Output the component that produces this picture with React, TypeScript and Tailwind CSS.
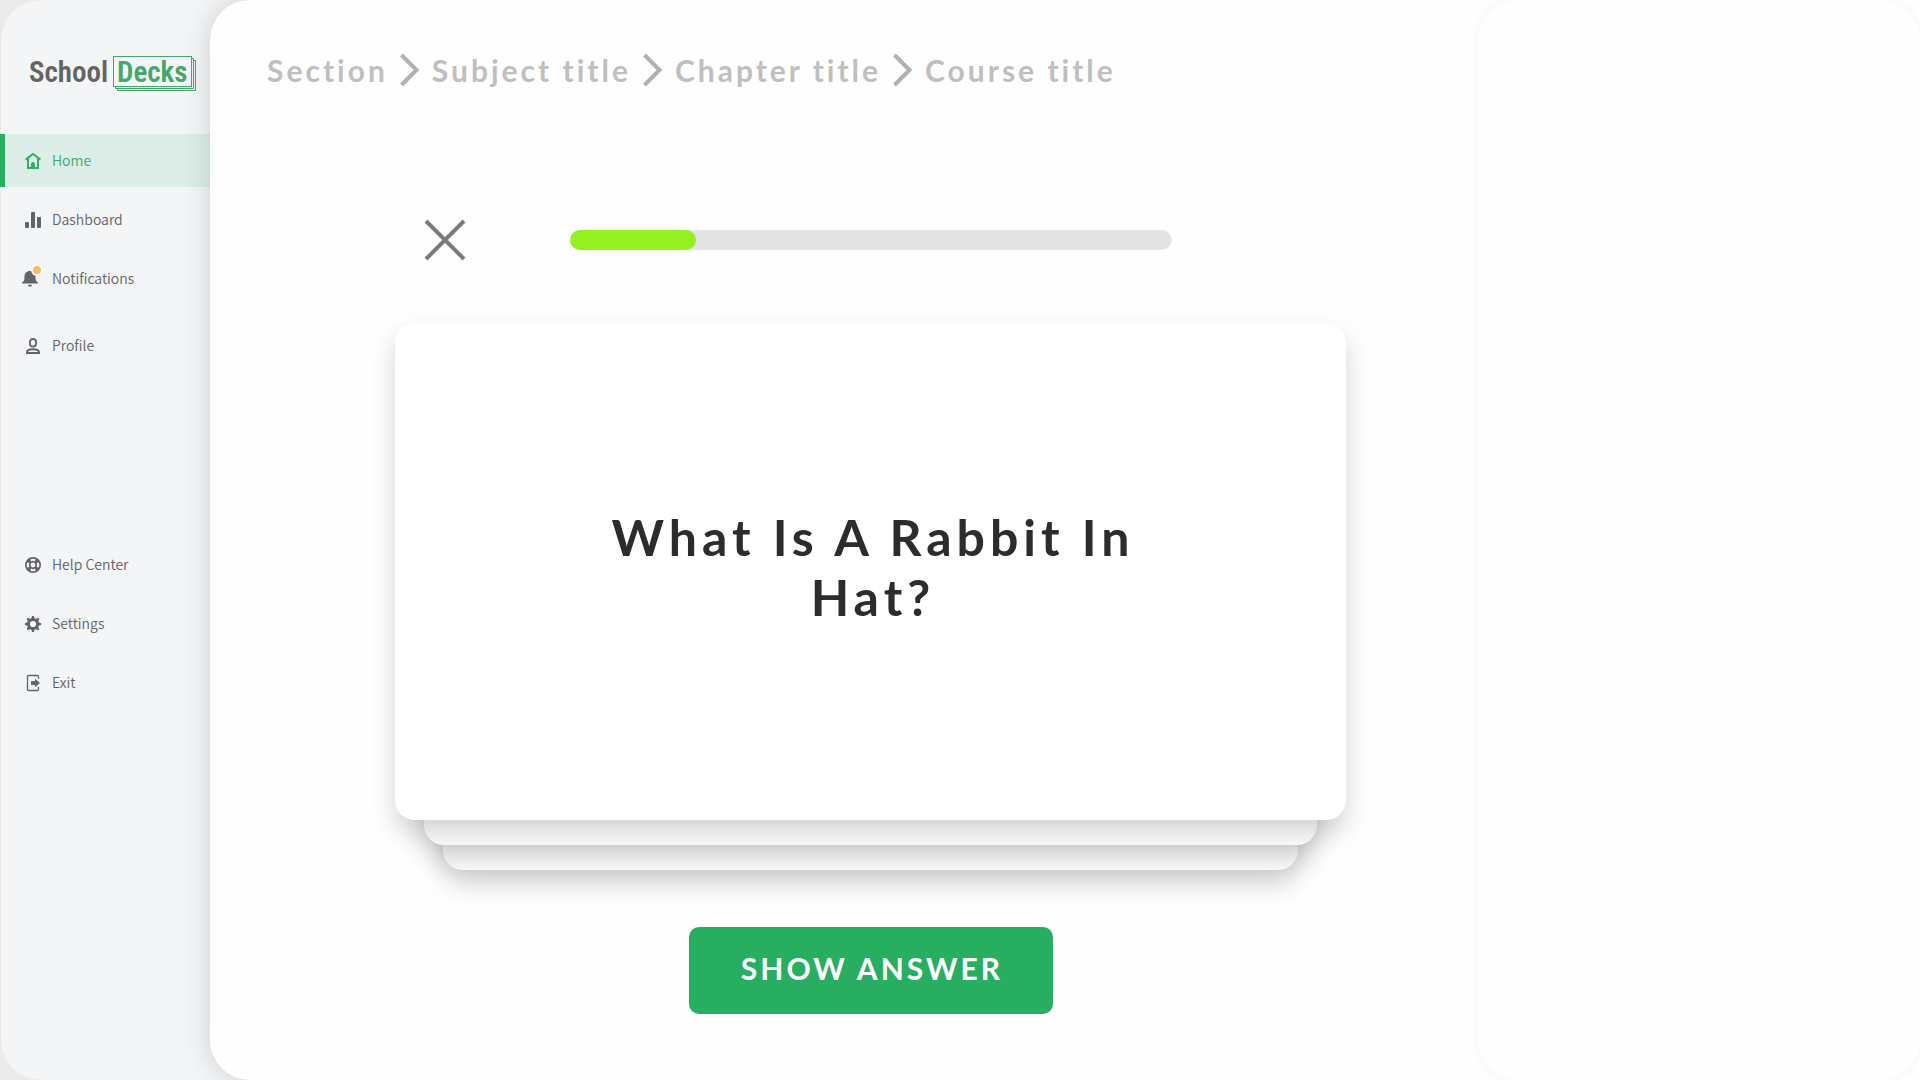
import type { ReactNode } from 'react'

type NavItem = {
  label: string
  icon: ReactNode
  active?: boolean
  className?: string
}

function Icon({ children }: { children: ReactNode }) {
  return (
    <svg width="16" height="16" viewBox="0 0 16 16" fill="currentColor" className="shrink-0 overflow-visible" aria-hidden="true">
      {children}
    </svg>
  )
}

const HomeIcon = (
  <Icon>
    <path d="M.6 6.6 8 1l7.4 5.600M3 5.500V15h10V5.500" fill="none" stroke="currentColor" strokeWidth="2" />
    <path d="M6 15v-4a2 2 0 0 1 4 0v4z" />
  </Icon>
)

const DashboardIcon = (
  <Icon>
    <rect x="0" y="10" width="4" height="6" rx="1" />
    <rect x="6" y="0" width="4" height="16" rx="1" />
    <rect x="12" y="5" width="4" height="11" rx="1" />
  </Icon>
)

const BellIcon = (
  <Icon>
    <path d="M-3 12.500v-1.200c1.500-.7 2.400-1.600 2.400-3.600V6C-.6 2.500 1.500 0 5 0s5.600 2.500 5.600 6v1.700c0 2 .9 2.900 2.400 3.600v1.200z" />
    <path d="M3 13.700h4a2 2 0 0 1-4 0z" />
    <circle cx="12" cy="-1" r="6" fill="#fdfaf2" />
    <circle cx="12" cy="-1" r="4" fill="#f8bb68" />
  </Icon>
)

const ProfileIcon = (
  <Icon>
    <rect x="4.900" y="1" width="6.200" height="7.600" rx="3.100" fill="none" stroke="currentColor" strokeWidth="1.800" />
    <path d="M2 15v-.6c0-2 2.400-3.200 6-3.200s6 1.200 6 3.200v.6z" fill="none" stroke="currentColor" strokeWidth="2" />
  </Icon>
)

const HelpIcon = (
  <Icon>
    <path
      fillRule="evenodd"
      d="M8 0a8 8 0 1 0 0 16A8 8 0 0 0 8 0zM5.500 2.200a6.500 6.500 0 0 1 5 0L10 4.400a4 4 0 0 0-4 0zM13.800 5.500a6.500 6.500 0 0 1 0 5L11.600 10a4 4 0 0 0 0-4zM10.500 13.800a6.500 6.500 0 0 1-5 0L6 11.600a4 4 0 0 0 4 0zM2.200 10.500a6.500 6.500 0 0 1 0-5L4.400 6a4 4 0 0 0 0 4zM8 5.600a2.400 2.400 0 1 0 0 4.800 2.400 2.400 0 0 0 0-4.800z"
    />
  </Icon>
)

const SettingsIcon = (
  <Icon>
    <circle cx="8" cy="8" r="4.600" fill="none" stroke="currentColor" strokeWidth="3" />
    {[0, 45, 90, 135].map((angle) => (
      <path key={angle} transform={`rotate(${angle} 8 8)`} d="M6.300 3 7 0h2l.7 3zM6.300 13l.7 3h2l.7-3z" />
    ))}
  </Icon>
)

const ExitIcon = (
  <Icon>
    <path d="M13.500 4V1.500a1 1 0 0 0-1-1h-9a1 1 0 0 0-1 1v13a1 1 0 0 0 1 1h9a1 1 0 0 0 1-1V12" fill="none" stroke="currentColor" strokeWidth="1.300" />
    <path d="M6 6h4V3.700L15 8l-5 4.300V10H6z" />
  </Icon>
)

const mainLinks: NavItem[] = [
  { label: 'Home', icon: HomeIcon, active: true },
  { label: 'Dashboard', icon: DashboardIcon },
  { label: 'Notifications', icon: BellIcon },
  { label: 'Profile', icon: ProfileIcon, className: 'mt-2' },
]

const secondaryLinks: NavItem[] = [
  { label: 'Help Center', icon: HelpIcon },
  { label: 'Settings', icon: SettingsIcon },
  { label: 'Exit', icon: ExitIcon },
]

const crumbs = ['Section', 'Subject title', 'Chapter title', 'Course title']

function Logo() {
  return (
    <svg width="168" height="36" viewBox="0 0 168 36" role="img" aria-label="School Decks" className="overflow-visible font-['Roboto_Condensed','Liberation_Sans_Narrow','Liberation_Sans',sans-serif] text-[29px] font-semibold">
      <g fill="none" stroke="#42a96a">
        <path d="M88.500 32v2.500h78v-30H165" />
        <path d="M86.500 30v2.500h78v-30H163" />
        <rect x="84.500" y=".5" width="78" height="30" />
      </g>
      <text x="0" y="26" fill="#636363">School</text>
      <text x="88" y="26" fill="#42a96a">Decks</text>
    </svg>
  )
}

function NavLinks({ items }: { items: NavItem[] }) {
  return (
    <ul className="flex flex-col gap-1.5">
      {items.map((item) => (
        <li key={item.label} className={item.className}>
          <a
            href="#"
            className={`-ml-px flex h-[53px] items-center gap-[11px] border-l-[5px] pl-5 text-sm ${
              item.active ? 'border-[#27ae60] bg-[#ddeee8] text-[#35ac68]' : 'border-transparent text-[#636466]'
            }`}
          >
            {item.icon}
            <span className="pb-0.5">{item.label}</span>
          </a>
        </li>
      ))}
    </ul>
  )
}

function Sidebar() {
  return (
    <aside className="w-[209px] shrink-0 font-['Noto_Sans_CJK_SC',sans-serif] font-[350]">
      <div className="pt-14 pl-7">
        <Logo />
      </div>
      <nav className="mt-[42px]">
        <NavLinks items={mainLinks} />
        <div className="mt-[166px]">
          <NavLinks items={secondaryLinks} />
        </div>
      </nav>
    </aside>
  )
}

function Breadcrumb() {
  return (
    <nav aria-label="Breadcrumb">
      <ol className="flex items-center gap-3 text-[30px] leading-9 font-bold tracking-widest text-[#bfbfbf]">
        {crumbs.map((crumb, i) => (
          <li key={crumb} className="flex items-center gap-3">
            {i > 0 && (
              <svg width="20" height="34" viewBox="0 0 20 34" fill="none" stroke="#b0b0b0" strokeWidth="4" aria-hidden="true">
                <path d="M1.500 2l15 15-15 15" />
              </svg>
            )}
            <a href="#">{crumb}</a>
          </li>
        ))}
      </ol>
    </nav>
  )
}

function Flashcard({ question }: { question: string }) {
  return (
    <div className="relative isolate">
      <div className="absolute inset-x-12 top-[50px] -bottom-[50px] rounded-[20px] bg-[#fefefe] shadow-[0_13px_26px_rgba(0,0,0,0.19)]" />
      <div className="absolute inset-x-[29px] top-[25px] -bottom-[25px] rounded-[20px] bg-[#fefefe] shadow-[0_13px_26px_rgba(0,0,0,0.19)]" />
      <div className="relative flex min-h-[497px] items-center justify-center rounded-[20px] bg-white px-[200px] pb-2.5 shadow-[0_13px_26px_rgba(0,0,0,0.17)]">
        <h1 className="pl-[5px] text-center text-[50px] leading-[60px] font-bold tracking-widest text-[#2b2c2c]">{question}</h1>
      </div>
    </div>
  )
}

export default function App() {
  const progress = 21

  return (
    <div className="min-h-screen bg-[#eaeaea] pl-px font-[Lato,sans-serif]">
      <div className="flex min-h-screen rounded-l-[40px] bg-[#f3f5f7]">
        <Sidebar />
        <div className="flex min-w-0 flex-1 rounded-l-[40px] bg-[#fefefe] shadow-[0_0_30px_rgba(0,0,0,0.16)]">
          <main className="min-w-0 flex-1 pt-[52px] pr-1 pl-[57px]">
            <Breadcrumb />
            <div className="mx-auto mt-[132px] max-w-[951px]">
              <div className="flex items-center gap-[105px] pr-[174px] pl-[30px]">
                <button type="button" aria-label="Close" className="shrink-0">
                  <svg width="40" height="40" viewBox="0 0 40 40" stroke="#7b7b7b" strokeWidth="4" className="overflow-visible">
                    <path d="M1 1l38 38M39 1L1 39" />
                  </svg>
                </button>
                <div role="progressbar" aria-label="Progress" aria-valuenow={progress} className="h-5 flex-1 rounded-full bg-[#e4e4e4]">
                  <div className="h-full rounded-full bg-[#95f022]" style={{ width: `${progress}%` }} />
                </div>
              </div>
              <div className="mt-[63px]">
                <Flashcard question="What Is A Rabbit In Hat?" />
              </div>
              <div className="mt-[107px] flex justify-center">
                <button type="button" className="h-[87px] w-[364px] rounded-[10px] bg-[#27ae60] pb-1 pl-[3px] text-[30px] font-bold tracking-widest text-white">
                  SHOW ANSWER
                </button>
              </div>
            </div>
          </main>
          <aside className="w-[442px] shrink-0 rounded-[40px] bg-[#fefefe] shadow-[0_0_12px_rgba(0,0,0,0.04)]" />
        </div>
      </div>
    </div>
  )
}
